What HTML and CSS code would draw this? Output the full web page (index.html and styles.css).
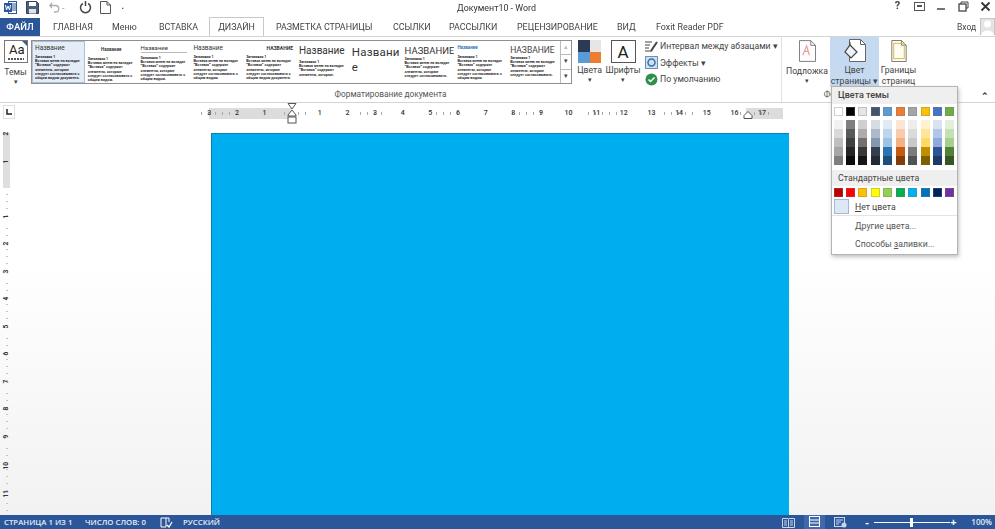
FILE: index.html
```html
<!DOCTYPE html>
<html lang="ru">
<head>
<meta charset="utf-8">
<title>Документ10 - Word</title>
<link rel="stylesheet" href="styles.css">
</head>
<body>
<div class="app">
  <header class="titlebar">
    <div class="qat">
      <svg class="qi word" width="13" height="13" viewBox="0 0 13 13"><rect x="4.500" y=".5" width="8" height="12" fill="#fff" stroke="#2b579a"/><path d="M7 3h5M7 5h5M7 7h5M7 9h5" stroke="#2b579a"/><rect x="0" y="2" width="8" height="9" fill="#2b579a"/><path d="M1.500 4l1 5 1.500-4 1.500 4 1-5" fill="none" stroke="#fff"/></svg>
      <svg class="qi save" width="13" height="13" viewBox="0 0 13 13"><path d="M.5.500h10l2 2v10H.5z" fill="#4d5f7a" stroke="#33415a"/><rect x="3" y="1" width="7" height="4" fill="#fff"/><rect x="3" y="8" width="7" height="4.500" fill="#dfe4ea"/></svg>
      <svg class="qi undo" width="11" height="11" viewBox="0 0 11 11"><path d="M3 1L.8 3.500 3 6M1 3.500h5.500a3.200 3.200 0 0 1 0 6.500H5" fill="none" stroke="#a9aeb5" stroke-width="1.300"/></svg>
      <span class="qcaret">-</span>
      <svg class="qi redo" width="13" height="13" viewBox="0 0 13 13"><path d="M3.800 2.500a5 5 0 1 0 5.400 0M6.500 0v5" fill="none" stroke="#444" stroke-width="1.500"/></svg>
      <svg class="qi newdoc" width="11" height="13" viewBox="0 0 11 13"><path d="M.5.500h6.500l3.500 3.500v8.500H.5zM7 .500V4h3.500" fill="#fff" stroke="#555"/></svg>
      <span class="qmore">▪</span>
    </div>
    <div class="doctitle">Документ10 - Word</div>
    <div class="winctl">
      <span class="help">?</span>
      <svg width="11" height="9" viewBox="0 0 11 9"><rect x=".5" y=".5" width="10" height="8" fill="none" stroke="#555"/><path d="M3 3h5v2H3z" fill="#555"/></svg>
      <svg width="11" height="9" viewBox="0 0 11 9"><path d="M1 7h8" stroke="#444" stroke-width="1.500"/></svg>
      <svg width="11" height="11" viewBox="0 0 11 11"><rect x="1" y="3" width="7" height="7" fill="none" stroke="#444" stroke-width="1.300"/><path d="M3 3V1h7v6H8" fill="none" stroke="#444"/></svg>
      <svg width="11" height="11" viewBox="0 0 11 11"><path d="M1.500 1.500l8 8M9.500 1.500l-8 8" stroke="#333" stroke-width="1.800"/></svg>
    </div>
  </header>

  <nav class="tabs">
    <span class="tab file">ФАЙЛ</span>
    <span class="tab t-home">ГЛАВНАЯ</span>
    <span class="tab t-menu">Меню</span>
    <span class="tab t-ins">ВСТАВКА</span>
    <span class="tab active">ДИЗАЙН</span>
    <span class="tab t-lay">РАЗМЕТКА СТРАНИЦЫ</span>
    <span class="tab t-ref">ССЫЛКИ</span>
    <span class="tab t-mail">РАССЫЛКИ</span>
    <span class="tab t-rev">РЕЦЕНЗИРОВАНИЕ</span>
    <span class="tab t-view">ВИД</span>
    <span class="tab t-fox">Foxit Reader PDF</span>
    <span class="login">Вход</span>
    <svg class="avatar" width="15" height="17" viewBox="0 0 15 17"><rect width="15" height="17" fill="#e4e4e4" stroke="#aaa"/><circle cx="7.500" cy="6" r="3.500" fill="#fff"/><path d="M1 17c1-6 12-6 13 0z" fill="#fff"/></svg>
  </nav>

  <section class="ribbon">
    <div class="group g-format">
      <div class="gbody">
        <div class="bigbtn themes">
          <svg class="theme-ic" width="24" height="23" viewBox="0 0 24 23"><rect x=".5" y=".5" width="23" height="22" fill="#fff" stroke="#777"/><path d="M18 1h5v5z" fill="#3c5d8f"/><path d="M4 19h16" stroke="#555" stroke-width="2" stroke-dasharray="2 1"/></svg>
          <span class="theme-aa">Aa</span>
          <span class="blabel">Темы</span>
          <span class="caret">▾</span>
        </div>
        <div class="gallery">
          <div class="gitem sel"><div class="t t1">Название</div><div class="h">Заголовок 1</div><p>Вставка меню на вкладке "Вставка" содержит элементы, которые следует согласовывать с общим видом документа.</p></div>
          <div class="gitem"><div class="t t2">Название</div><div class="h">Заголовок 1</div><p>Вставка меню на вкладке "Вставка" содержит элементы, которые следует согласовывать с общим видом.</p></div>
          <div class="gitem"><div class="t t3">Название</div><div class="h">Заголовок 1</div><p>Вставка меню на вкладке "Вставка" содержит элементы, которые следует согласовывать с общим видом.</p></div>
          <div class="gitem"><div class="t t4">Название</div><div class="h">Заголовок 1</div><p>Вставка меню на вкладке "Вставка" содержит элементы, которые следует согласовывать с общим видом.</p></div>
          <div class="gitem"><div class="t t5">НАЗВАНИЕ</div><div class="h">Заголовок 1</div><p>Вставка меню на вкладке "Вставка" содержит элементы, которые следует согласовывать с общим видом документа.</p></div>
          <div class="gitem"><div class="t t6">Название</div><div class="h">Заголовок 1</div><p>Вставка меню на вкладке "Вставка" содержит элементы, которые.</p></div>
          <div class="gitem"><div class="t t7">Названи е</div></div>
          <div class="gitem"><div class="t t8">НАЗВАНИЕ</div><div class="h">Заголовок 1</div><p>Вставка меню на вкладке "Вставка" содержит элементы, которые следует согласовывать.</p></div>
          <div class="gitem"><div class="t t9">Название</div><div class="h">Заголовок 1</div><p>Вставка меню на вкладке "Вставка" содержит элементы, которые следует согласовывать с общим видом.</p></div>
          <div class="gitem"><div class="t t10">НАЗВАНИЕ</div><div class="h">Заголовок 1</div><p>Вставка меню на вкладке "Вставка" содержит элементы, которые следует согласовывать.</p></div>
          <div class="gscroll"><span class="dim">▴</span><span>▾</span><span>▾</span></div>
        </div>
        <div class="bigbtn colors">
          <div class="quad"><i class="q1"></i><i class="q2"></i><i class="q3"></i><i class="q4"></i></div>
          <span class="blabel">Цвета</span>
          <span class="caret">▾</span>
        </div>
        <div class="bigbtn fonts">
          <div class="fontbox">A</div>
          <span class="blabel">Шрифты</span>
          <span class="caret">▾</span>
        </div>
        <div class="minis">
          <div class="mini"><svg width="13" height="13" viewBox="0 0 13 13"><path d="M0 2h7M0 5h5M0 8h4M0 11h7" stroke="#444"/><path d="M6 11L12 2" stroke="#444" stroke-width="2"/></svg><span>Интервал между абзацами ▾</span></div>
          <div class="mini"><svg width="13" height="13" viewBox="0 0 13 13"><rect x=".5" y=".5" width="12" height="12" fill="#cfe0f2" stroke="#6a8fb8"/><circle cx="6.500" cy="6.500" r="3.500" fill="none" stroke="#3c6ea5" stroke-width="1.500"/></svg><span>Эффекты ▾</span></div>
          <div class="mini"><svg width="13" height="13" viewBox="0 0 13 13"><circle cx="6.500" cy="6.500" r="6" fill="#2f8f4e"/><path d="M3.500 6.500l2 2 4-4" fill="none" stroke="#fff" stroke-width="1.500"/></svg><span>По умолчанию</span></div>
        </div>
      </div>
      <div class="glabel">Форматирование документа</div>
    </div>
    <div class="group g-page">
      <div class="gbody">
        <div class="pbtn pb-water">
          <svg width="17" height="22" viewBox="0 0 18 23"><path d="M.5.500h12l5 5v17H.5zM12.500.500v5h5" fill="#fff" stroke="#777"/><path d="M4 16l4-10 3 10M5.500 12h4" fill="none" stroke="#e8a0a0" stroke-width="1.300"/></svg>
          <span class="plabel">Подложка</span>
          <span class="caret">▾</span>
        </div>
        <div class="pbtn pb-color">
          <svg width="23" height="23" viewBox="0 0 23 23"><path d="M6.500.500h11l5 5v17h-16z" fill="#fff" stroke="#666"/><path d="M17.500.500v5h5" fill="none" stroke="#666"/><path d="M7 6l7 7-6 6-6-6z" fill="#eef3f9" stroke="#444" stroke-width="1.200"/><path d="M7 6V3" stroke="#444"/></svg>
          <span class="plabel">Цвет</span>
          <span class="plabel">страницы ▾</span>
        </div>
        <div class="pbtn pb-border">
          <svg width="16" height="22" viewBox="0 0 16 23"><path d="M.5.500h10l5 5v17H.5zM10.500.500v5h5" fill="#fffdf0" stroke="#777"/><rect x="2.500" y="3.500" width="11" height="16" fill="none" stroke="#d8b54a"/></svg>
          <span class="plabel">Границы</span>
          <span class="plabel">страниц</span>
        </div>
      </div>
      <div class="glabel">Фон страницы</div>
    </div>
    <div class="collapse">⌃</div>
  </section>

  <div class="rulerrow">
    <div class="tabstop"><svg width="6" height="6" viewBox="0 0 6 6"><path d="M1 0v5h5" fill="none" stroke="#222" stroke-width="1.500"/></svg></div>
    <div class="hruler">
      <div class="margin-l"></div>
      <div class="margin-r"></div>
      <div class="rcells">
        <span>3</span><span>2</span><span>1</span><span></span><span>1</span><span>2</span><span>3</span><span>4</span><span>5</span><span>6</span><span>7</span><span>8</span><span>9</span><span>10</span><span>11</span><span>12</span><span>13</span><span>14</span><span>15</span><span>16</span><span>17</span>
      </div>
      <svg class="indent" width="10" height="21" viewBox="0 0 10 21"><path d="M1 .500h8L5 6z" fill="#fff" stroke="#555"/><path d="M5 7l4 5v1H1v-1z" fill="#fff" stroke="#555"/><rect x="1" y="14" width="8" height="6" fill="#fff" stroke="#555"/></svg>
      <svg class="rindent" width="10" height="8" viewBox="0 0 10 8"><path d="M5 .500l4 4v3H1v-3z" fill="#fff" stroke="#555"/></svg>
    </div>
  </div>

  <main class="docarea">
    <div class="vruler">
      <div class="vgrey"></div>
      <div class="vcells"><span>2</span><span>1</span><span></span><span>1</span><span>2</span><span>3</span><span>4</span><span>5</span><span>6</span><span>7</span><span>8</span><span>9</span><span>10</span><span>11</span></div>
    </div>
    <div class="page"></div>
  </main>

  <footer class="status">
    <span class="s1">СТРАНИЦА 1 ИЗ 1</span>
    <span class="s2">ЧИСЛО СЛОВ: 0</span>
    <svg class="sproof" width="13" height="11" viewBox="0 0 13 11"><path d="M1 1h5v9H1zM6 1h3v4" fill="none" stroke="#fff"/><path d="M7 8l2 2 3-5" fill="none" stroke="#fff" stroke-width="1.300"/></svg>
    <span class="s3">РУССКИЙ</span>
    <div class="sright">
      <svg width="13" height="11" viewBox="0 0 13 11"><path d="M.5 1.500h5.500l.5 1 .5-1h5.500v9h-12zM6.500 2.500v8M2 4h3M2 6h3M2 8h3M8 4h3M8 6h3M8 8h3" fill="none" stroke="#c9d6ea"/></svg>
      <span class="viewsel"><svg width="13" height="11" viewBox="0 0 13 11"><rect x="1.500" y=".5" width="10" height="10" fill="none" stroke="#fff"/><path d="M1.500 4h10M1.500 7h10" stroke="#fff"/></svg></span>
      <svg width="13" height="11" viewBox="0 0 13 11"><rect x=".5" y=".5" width="10" height="9" fill="none" stroke="#c9d6ea"/><path d="M2 3h7M2 5h5M2 7h3" stroke="#c9d6ea"/><circle cx="10" cy="8" r="2.500" fill="#c9d6ea"/></svg>
      <div class="zoom">
        <span class="zm">-</span>
        <div class="ztrack"><i class="zthumb"></i></div>
        <span class="zp">+</span>
      </div>
      <span class="zval">100%</span>
    </div>
  </footer>

  <aside class="menu">
    <div class="mhead">Цвета темы</div>
    <div class="toprow">
      <i style="background:#ffffff"></i><i style="background:#000000"></i><i style="background:#e7e6e6"></i><i style="background:#44546a"></i><i style="background:#5b9bd5"></i><i style="background:#ed7d31"></i><i style="background:#a5a5a5"></i><i style="background:#ffc000"></i><i style="background:#4472c4"></i><i style="background:#70ad47"></i>
    </div>
    <div class="shades">
      <div class="shcol"><i style="background:#f2f2f2"></i><i style="background:#d9d9d9"></i><i style="background:#bfbfbf"></i><i style="background:#a6a6a6"></i><i style="background:#7f7f7f"></i></div>
      <div class="shcol"><i style="background:#7f7f7f"></i><i style="background:#595959"></i><i style="background:#404040"></i><i style="background:#262626"></i><i style="background:#0d0d0d"></i></div>
      <div class="shcol"><i style="background:#d0cece"></i><i style="background:#aeabab"></i><i style="background:#757070"></i><i style="background:#3a3838"></i><i style="background:#171616"></i></div>
      <div class="shcol"><i style="background:#d6dce4"></i><i style="background:#adb9ca"></i><i style="background:#8496b0"></i><i style="background:#333f4f"></i><i style="background:#222a35"></i></div>
      <div class="shcol"><i style="background:#deeaf6"></i><i style="background:#bdd6ee"></i><i style="background:#9cc3e5"></i><i style="background:#2e74b5"></i><i style="background:#1f4e79"></i></div>
      <div class="shcol"><i style="background:#fbe5d5"></i><i style="background:#f7cbac"></i><i style="background:#f4b183"></i><i style="background:#c55a11"></i><i style="background:#833c0b"></i></div>
      <div class="shcol"><i style="background:#ededed"></i><i style="background:#dbdbdb"></i><i style="background:#c9c9c9"></i><i style="background:#7b7b7b"></i><i style="background:#525252"></i></div>
      <div class="shcol"><i style="background:#fff2cc"></i><i style="background:#fee599"></i><i style="background:#ffd965"></i><i style="background:#bf8f00"></i><i style="background:#7f6000"></i></div>
      <div class="shcol"><i style="background:#d9e2f3"></i><i style="background:#b4c6e7"></i><i style="background:#8eaadb"></i><i style="background:#2f5496"></i><i style="background:#1f3864"></i></div>
      <div class="shcol"><i style="background:#e2efd9"></i><i style="background:#c5e0b3"></i><i style="background:#a8d08d"></i><i style="background:#538135"></i><i style="background:#375623"></i></div>
    </div>
    <div class="mhead std">Стандартные цвета</div>
    <div class="toprow stdrow">
      <i style="background:#c00000"></i><i style="background:#ff0000"></i><i style="background:#ffc000"></i><i style="background:#ffff00"></i><i style="background:#92d050"></i><i style="background:#00b050"></i><i style="background:#00b0f0"></i><i style="background:#0070c0"></i><i style="background:#002060"></i><i style="background:#7030a0"></i>
    </div>
    <div class="nocolor"><span class="nobox"></span><span><u>Н</u>ет цвета</span></div>
    <div class="mitem mfirst"><u>Д</u>ругие цвета...</div>
    <div class="mitem">Способы <u>з</u>аливки...</div>
  </aside>
</div>
</body>
</html>
```
FILE: styles.css
```css
* { box-sizing: border-box; }
html, body { margin: 0; padding: 0; }
body { font-family: Roboto, "Open Sans", sans-serif; color: #444; background: #fff; overflow: hidden; }
.app { position: relative; width: 995px; height: 529px; display: flex; flex-direction: column; overflow: hidden; filter: blur(.35px); }
svg { display: block; flex: none; }

.titlebar { height: 17px; display: flex; align-items: flex-start; justify-content: space-between; position: relative; }
.qat { display: flex; align-items: center; padding: 1px 0 0 4px; }
.word { margin-right: 9px; }
.save { margin-right: 10px; }
.qcaret { width: 19px; font-size: 9px; color: #999; padding-left: 2px; }
.redo { margin-right: 8px; }
.newdoc { margin-right: 11px; }
.qmore { font-size: 5px; color: #555; }
.doctitle { position: absolute; left: 457px; top: 0; font-size: 8.900px; line-height: 16px; color: #333; }
.winctl { display: flex; align-items: center; gap: 11px; padding: 0 4px 0 0; height: 12px; }
.help { width: 11px; text-align: center; font-size: 11px; font-weight: 700; color: #444; line-height: 12px; }

.tabs { height: 19px; display: flex; align-items: center; position: relative; z-index: 2; }
.tab { font-size: 8.900px; line-height: 18px; color: #444; white-space: nowrap; }
.file { width: 40px; height: 18px; background: #2b579a; color: #fff; text-align: center; font-weight: 500; font-size: 9.500px; margin-right: 13px; }
.t-home { width: 59px; }
.t-menu { width: 47px; }
.t-ins { width: 50px; }
.active { width: 55px; height: 19px; border: 1px solid #c9c9c9; border-bottom: 0; background: #fff; text-align: center; margin-right: 12px; }
.t-lay { width: 117px; }
.t-ref { width: 56px; }
.t-mail { width: 68px; }
.t-rev { width: 100px; }
.t-view { width: 39px; }
.t-fox { width: 301px; }
.login { font-size: 8.500px; width: 23px; color: #444; }
.avatar { height: 17px; }

.ribbon { height: 67px; display: flex; border-top: 1px solid #d4d4d4; border-bottom: 1px solid #d4d4d4; background: #fff; position: relative; }
.group { display: flex; flex-direction: column; position: relative; flex: none; }
.g-format { width: 782px; border-right: 1px solid #e2e2e2; }
.g-page { width: 140px; }
.gbody { flex: 1; display: flex; min-height: 0; }
.gbody > * { flex: none; }
.glabel { height: 12px; font-size: 8.300px; line-height: 11px; text-align: center; color: #555; margin-bottom: 1px; white-space: nowrap; }

.bigbtn { display: flex; flex-direction: column; align-items: center; position: relative; }
.blabel { font-size: 8.700px; line-height: 12px; color: #444; white-space: nowrap; }
.caret { font-size: 7px; line-height: 9px; color: #444; }
.themes { width: 31px; padding: 3px 0 0 0; }
.theme-ic { margin-bottom: 3px; }
.theme-aa { position: absolute; left: 9px; top: 5px; font-size: 13px; line-height: 16px; color: #222; }
.gallery { width: 541px; height: 44px; margin-top: 3px; display: grid; grid-template-columns: repeat(10, 52.800px) 11px; border: 1px solid #8f8f8f; overflow: hidden; background: #fff; }
.gitem { padding: 3px 3px 0 3px; overflow: hidden; height: 42px; }
.gitem.sel { background: #e4ecf7; border: 1px solid #a9bfdc; padding: 2px 2px 0 2px; }
.gitem .t { font-size: 6.500px; line-height: 8px; color: #333; white-space: nowrap; }
.gitem .h { font-size: 3.500px; line-height: 4px; font-weight: 700; color: #222; margin-top: 3px; white-space: nowrap; }
.gitem p { margin: 0; font-family: "Liberation Sans", sans-serif; font-size: 3.500px; line-height: 4.300px; font-weight: 700; color: #111; }
.gitem .t2 { font-size: 4.500px; font-weight: 700; text-align: center; margin-top: 2px; margin-bottom: 3px; }
.gitem .t3 { border-bottom: 1px solid #bbb; font-size: 6px; }
.gitem .t5 { font-size: 5px; font-weight: 700; text-align: right; margin-bottom: 3px; }
.gitem .t6 { font-size: 10px; line-height: 13px; }
.gitem .t7 { font-size: 11.500px; line-height: 15px; white-space: normal; padding-top: 1px; letter-spacing: .2px; width: 44px; }
.gitem .t8 { font-size: 9.500px; line-height: 12px; color: #333; margin-top: 1px; }
.gitem .t8 + .h { margin-top: 0; }
.gitem .t9 { font-size: 4.500px; color: #2e74b5; font-weight: 700; margin-bottom: 2px; }
.gitem .t10 { font-size: 8.500px; line-height: 12px; color: #444; }
.gitem .t10 + .h { margin-top: 0; }
.gscroll { display: flex; flex-direction: column; border-left: 1px solid #bbb; width: 11px; }
.gscroll span { flex: 1; font-size: 7px; line-height: 13px; text-align: center; border-bottom: 1px solid #bbb; color: #444; }
.gscroll span:last-child { border-bottom: 0; }
.gscroll .dim { color: #bbb; }
.colors { width: 37px; padding-top: 3px; margin-left: -1px; }
.quad { width: 23px; height: 23px; display: grid; grid-template-columns: 1fr 1fr; grid-template-rows: 1fr 1fr; margin-bottom: 1px; }
.q1 { background: #2b3a55; }
.q2 { background: #e7e6e6; }
.q3 { background: #5b9bd5; }
.q4 { background: #ed7d31; }
.fonts { width: 30px; padding-top: 3px; }
.fontbox { width: 25px; height: 23px; border: 1px solid #555; font-size: 17px; line-height: 22px; text-align: center; color: #222; margin-bottom: 1px; }
.minis { display: flex; flex-direction: column; padding: 2px 0 0 7px; gap: 2.500px; }
.mini { display: flex; align-items: center; gap: 2px; font-size: 8.700px; line-height: 14px; white-space: nowrap; color: #444; }

.g-page .gbody { padding-left: 5px; }
.pbtn { display: flex; flex-direction: column; align-items: center; }
.pb-water { width: 40px; padding-top: 3px; }
.pb-water svg { margin-bottom: 4px; }
.pb-color { width: 49px; height: 50px; background: #c5d9f1; padding-top: 2px; margin-left: 3px; }
.pb-color svg { margin-bottom: 3px; }
.pb-border { width: 37px; padding-top: 3px; margin-left: 1px; }
.pb-border svg { margin-bottom: 3px; }
.plabel { font-size: 8.700px; line-height: 11px; color: #444; white-space: nowrap; }
.collapse { position: absolute; left: 981px; top: 54px; font-size: 9px; line-height: 10px; color: #333; font-weight: 700; }

.rulerrow { height: 23px; display: flex; padding: 2px 0 0 3px; background: #fff; }
.tabstop { width: 12px; height: 14px; border: 1px solid #ddd; display: flex; align-items: center; justify-content: center; }
.hruler { position: relative; margin-left: 194px; width: 574px; height: 11px; margin-top: 3px; }
.margin-l { position: absolute; left: 0; top: 0; width: 82px; height: 11px; background: #dcdcdc; }
.margin-r { position: absolute; left: 537px; top: 0; width: 37px; height: 11px; background: #dcdcdc; }
.rcells { position: relative; display: flex; height: 11px; margin-left: -13.600px; background: repeating-linear-gradient(90deg, transparent 0 6.500px, #aaa 6.500px 6.910px) 0 4px / 100% 3px no-repeat; }
.rcells span { flex: 0 0 27.650px; font-size: 7px; line-height: 11px; text-align: center; color: #333; font-weight: 500; }
.indent { position: absolute; left: 78px; top: -5px; }
.rindent { position: absolute; left: 534px; top: 3px; }

.docarea { flex: 1; min-height: 0; display: flex; padding: 7px 0 0 3px; overflow: hidden; background: linear-gradient(#fff 0, #fff 35%, #f2f2f2 100%); }
.vruler { width: 8px; position: relative; margin-right: 200px; background: repeating-linear-gradient(180deg, transparent 0 6px, #c4c4c4 6px 6.875px) 3px 0 / 2px 100% no-repeat; }
.vgrey { position: absolute; left: 0; top: 0; width: 7px; height: 55px; background: #dedede; }
.vcells { position: relative; display: flex; flex-direction: column; margin-top: -1px; }
.vcells span { flex: 0 0 27.500px; height: 27.500px; writing-mode: vertical-rl; transform: rotate(180deg); font-size: 6.500px; line-height: 7px; text-align: right; color: #333; font-weight: 700; }
.page { width: 578px; height: 400px; background: #00aeef; border-top: 1px solid #0d7fae; border-left: 1px solid #0d7fae; }

.status { height: 14px; background: #2b579a; color: #e6edf7; display: flex; align-items: center; font-family: "Open Sans", sans-serif; font-size: 7.800px; line-height: 14px; padding-left: 4px; white-space: nowrap; font-weight: 600; }
.s1 { width: 81px; }
.s2 { width: 75px; }
.sproof { margin-right: 10px; }
.sright { margin-left: auto; display: flex; align-items: center; gap: 13px; padding-right: 3px; }
.viewsel { height: 14px; width: 21px; margin: 0 -4px; padding: 1px 4px; background: #3e6aad; }
.zoom { display: flex; align-items: center; margin-left: 5px; margin-right: -1px; }
.zm, .zp { font-size: 11px; color: #fff; font-weight: 700; line-height: 14px; width: 9px; }
.ztrack { position: relative; width: 76px; height: 1px; background: #fff; }
.zthumb { position: absolute; left: 36px; top: -4px; width: 3px; height: 9px; background: #fff; }
.zval { font-size: 8px; }

.menu { position: absolute; left: 831px; top: 86px; width: 127px; height: 169px; background: #fff; border: 1px solid #b4b4b4; box-shadow: 1px 2px 4px rgba(0,0,0,.25); z-index: 5; font-size: 8.700px; color: #444; }
.mhead { height: 17px; background: #efefef; line-height: 17px; padding-left: 6px; font-size: 9px; font-weight: 500; color: #444; }
.toprow { display: flex; gap: 3.450px; padding: 3px 0 0 1.500px; }
.toprow i { display: block; width: 9px; height: 9px; border: 1px solid rgba(120,120,120,.35); }
.shades { display: flex; gap: 3.450px; padding: 4px 0 0 1.500px; height: 50px; }
.shcol { width: 9px; display: flex; flex-direction: column; }
.shcol i { flex: 0 0 9px; display: block; }
.mhead.std { margin-top: 4px; height: 16px; line-height: 16px; font-weight: 400; font-size: 8.800px; }
.stdrow { padding-top: 2px; }
.nocolor { display: flex; align-items: center; gap: 6px; padding: 1px 0 0 2px; height: 19px; border-bottom: 1px solid #e4e4e4; }
.nobox { width: 15px; height: 15px; background: #dde8f6; border: 1px solid #a6b9d3; }
.mitem { height: 18px; line-height: 18px; padding-left: 23px; color: #555; }
.mfirst { margin-top: 1px; }
```
